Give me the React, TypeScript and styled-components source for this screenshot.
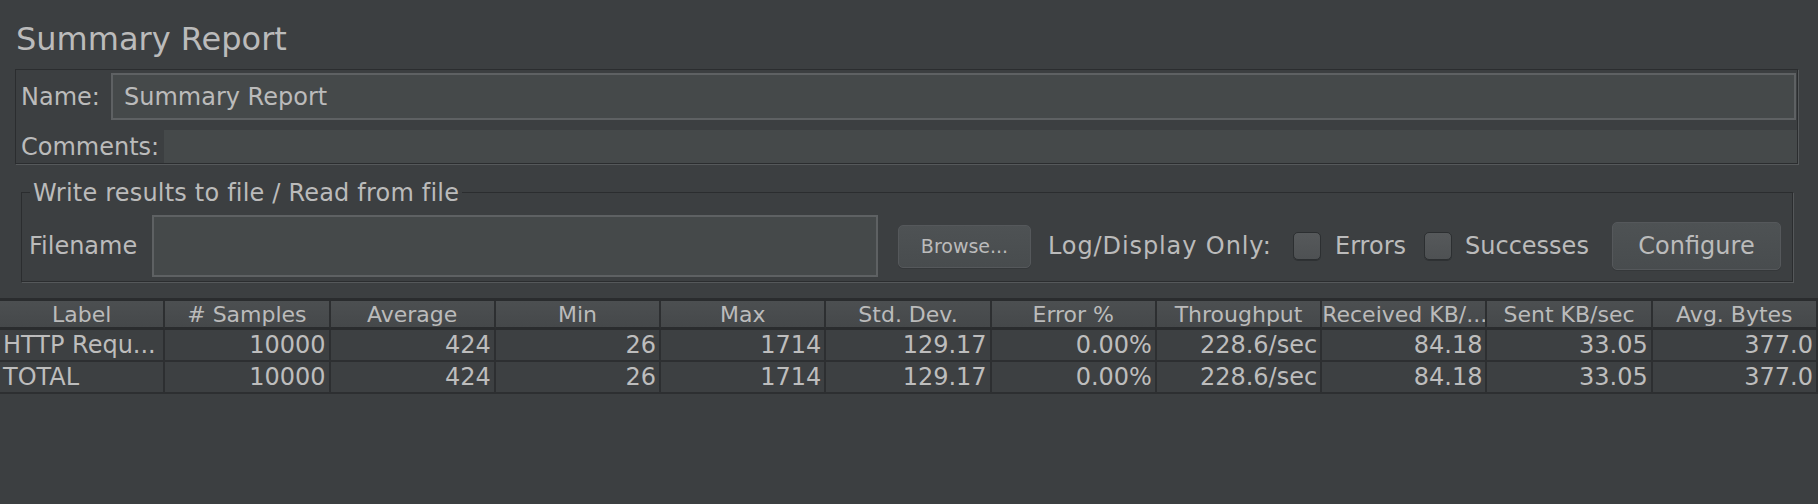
import React from 'react';
import styled, { createGlobalStyle } from 'styled-components';

const GlobalStyle = createGlobalStyle`
  html, body { margin: 0; padding: 0; background: #3c3f41; }
  body { font-family: "DejaVu Sans", "Liberation Sans", sans-serif; color: #bbbbbb; }
  * { box-sizing: border-box; }
`;

const Page = styled.div`
  width: 1818px;
  height: 504px;
  overflow: hidden;
  background: #3c3f41;
  display: flex;
  flex-direction: column;
`;

const Title = styled.h1`
  margin: 0 0 10px 0;
  padding: 19px 0 0 16px;
  font-size: 32px;
  line-height: 40px;
  font-weight: normal;
  color: #bbbbbb;
`;

const NamePanel = styled.div`
  margin-left: 15px;
  width: 1783px;
  height: 95px;
  border: 1px solid #2b2d2f;
  box-shadow: 1px 1px 0 #56595b;
  display: flex;
  flex-direction: column;
`;

const NameRow = styled.div`
  height: 50px;
  padding-top: 3px;
  display: flex;
  align-items: flex-start;
`;

const CommentsRow = styled.div`
  margin-top: 10px;
  height: 33px;
  display: flex;
  align-items: stretch;
`;

const RowLabel = styled.div<{ $w: number; $h?: number }>`
  width: ${(p) => p.$w}px;
  height: ${(p) => (p.$h ? `${p.$h}px` : 'auto')};
  flex: none;
  padding-left: 5px;
  font-size: 24px;
  display: flex;
  align-items: center;
  white-space: nowrap;
`;

const TextField = styled.div`
  flex: 1;
  height: 47px;
  margin-right: 1px;
  background: #45494a;
  border: 2px solid #5e6163;
  padding-left: 11px;
  font-size: 24px;
  display: flex;
  align-items: center;
  color: #bbbbbb;
`;

const TextArea = styled.div`
  flex: 1;
  background: #45494a;
`;

const Group = styled.fieldset`
  margin: 12px 0 0 21px;
  width: 1772px;
  border: 1px solid #2b2d2f;
  box-shadow: 1px 1px 0 #55585a;
  padding: 7px 11px 4px 7px;
  min-inline-size: 0;
`;

const Legend = styled.legend`
  margin-left: 1px;
  padding: 2px 3px 0 3px;
  font-size: 24px;
  line-height: 30px;
  color: #bbbbbb;
  letter-spacing: 0.2px;
`;

const FileRow = styled.div`
  height: 62px;
  display: flex;
  align-items: center;
`;

const InlineLabel = styled.span<{ $w: number; $ml?: number; $ls?: number }>`
  width: ${(p) => p.$w}px;
  margin-left: ${(p) => p.$ml ?? 0}px;
  letter-spacing: ${(p) => p.$ls ?? 0}px;
  flex: none;
  font-size: 24px;
  white-space: nowrap;
  color: #bbbbbb;
`;

const FileField = styled.div`
  width: 726px;
  height: 62px;
  flex: none;
  background: #45494a;
  border: 2px solid #5e6163;
`;

const Button = styled.button<{ $w: number; $h: number; $ml: number; $fs: number }>`
  width: ${(p) => p.$w}px;
  height: ${(p) => p.$h}px;
  margin-left: ${(p) => p.$ml}px;
  flex: none;
  border-radius: 5px;
  border: 1px solid #55585b;
  background: linear-gradient(#4e5254, #484c4e);
  box-shadow: 0 1px 0 #35383a;
  color: #bbbbbb;
  font-family: "DejaVu Sans", "Liberation Sans", sans-serif;
  font-size: ${(p) => p.$fs}px;
  padding: 0;
`;

const Check = styled.span`
  width: 28px;
  height: 28px;
  flex: none;
  border-radius: 5px;
  border: 1px solid #2c2f31;
  background: linear-gradient(#56595b, #4e5153);
  box-shadow: 0 1px 0 #2e3133;
`;

const Table = styled.div`
  margin-top: 16px;
  width: 1818px;
  border-top: 3px solid #2a2c2e;
  display: grid;
  grid-template-columns: repeat(11, 1fr);
`;

const HeadCell = styled.div`
  height: 29px;
  padding-top: 2px;
  line-height: 24px;
  font-size: 22px;
  text-align: center;
  white-space: nowrap;
  overflow: hidden;
  background: linear-gradient(#4c4f51, #45484a);
  border-right: 2px solid #2d2f31;
  border-bottom: 3px solid #2a2c2e;
  color: #bbbbbb;
`;

const Cell = styled.div<{ $left?: boolean }>`
  height: 32px;
  line-height: 30px;
  font-size: 24px;
  padding: 0 3px;
  text-align: ${(p) => (p.$left ? 'left' : 'right')};
  white-space: nowrap;
  overflow: hidden;
  background: #3d4042;
  border-right: 2px solid #2d2f31;
  border-bottom: 2px solid #2d2f31;
  color: #bdbdbd;
`;

const headers = [
  'Label',
  '# Samples',
  'Average',
  'Min',
  'Max',
  'Std. Dev.',
  'Error %',
  'Throughput',
  'Received KB/...',
  'Sent KB/sec',
  'Avg. Bytes',
];

const rows = [
  ['HTTP Requ...', '10000', '424', '26', '1714', '129.17', '0.00%', '228.6/sec', '84.18', '33.05', '377.0'],
  ['TOTAL', '10000', '424', '26', '1714', '129.17', '0.00%', '228.6/sec', '84.18', '33.05', '377.0'],
];

export default function App() {
  return (
    <Page>
      <GlobalStyle />
      <Title>Summary Report</Title>
      <NamePanel>
        <NameRow>
          <RowLabel $w={95} $h={47}>Name:</RowLabel>
          <TextField>Summary Report</TextField>
        </NameRow>
        <CommentsRow>
          <RowLabel $w={148}>Comments:</RowLabel>
          <TextArea />
        </CommentsRow>
      </NamePanel>
      <Group>
        <Legend>Write results to file / Read from file</Legend>
        <FileRow>
          <InlineLabel $w={123}>Filename</InlineLabel>
          <FileField />
          <Button $w={133} $h={43} $ml={20} $fs={19}>Browse...</Button>
          <InlineLabel $w={245} $ml={17} $ls={0.9}>Log/Display Only:</InlineLabel>
          <Check />
          <InlineLabel $w={89} $ml={14}>Errors</InlineLabel>
          <Check />
          <InlineLabel $w={147} $ml={13}>Successes</InlineLabel>
          <Button $w={169} $h={48} $ml={0} $fs={24}>Configure</Button>
        </FileRow>
      </Group>
      <Table>
        {headers.map((h) => (
          <HeadCell key={h}>{h}</HeadCell>
        ))}
        {rows.map((r, ri) =>
          r.map((c, ci) => (
            <Cell key={`${ri}-${ci}`} $left={ci === 0}>
              {c}
            </Cell>
          ))
        )}
      </Table>
    </Page>
  );
}
